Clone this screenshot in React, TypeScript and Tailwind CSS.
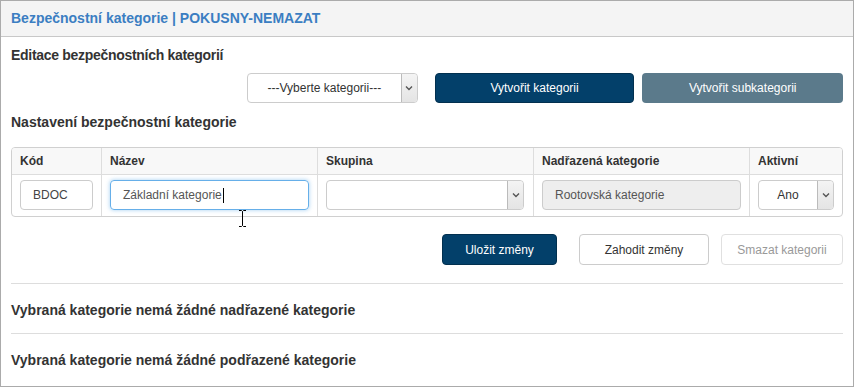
import React from "react";

const Chevron = () => (
  <svg width="8" height="6" viewBox="0 0 8 6" className="block">
    <path d="M1 1.5 L4 4.5 L7 1.5" fill="none" stroke="#555" strokeWidth="1.4" />
  </svg>
);

function SelectBox({ text, className, center = true }: { text: string; className: string; center?: boolean }) {
  return (
    <div className={"flex h-[30px] rounded-[4px] border border-[#ccc] bg-white overflow-hidden " + className}>
      <div className={"flex-1 flex items-center text-[12px] text-[#333] " + (center ? "justify-center" : "pl-3")}>{text}</div>
      <div className="w-[16px] flex items-center justify-center border-l border-[#bbb] bg-gradient-to-b from-[#f4f4f4] to-[#e4e4e4] rounded-r-[3px]">
        <Chevron />
      </div>
    </div>
  );
}

export default function App() {
  return (
    <div className="w-[854px] h-[387px] bg-white font-['Liberation_Sans',Arial,sans-serif] relative">
      <div className="h-full border border-[#ababab] flex flex-col">
        <div className="h-[36px] bg-[#f4f4f4] border-b border-[#c8c8c8] px-[10px] flex items-center text-[14px] font-bold text-[#3b7ec2]">
          Bezpečnostní kategorie | POKUSNY-NEMAZAT
        </div>
        <div className="px-[10px] flex flex-col">
          <h2 className="mt-[8px] h-[20px] leading-[20px] text-[14px] font-bold text-[#333] tracking-[-0.3px]">Editace bezpečnostních kategorií</h2>
          <div className="mt-[8px] flex">
            <SelectBox text="---Vyberte kategorii---" className="ml-[236px] w-[171px]" />
            <button className="ml-[17px] w-[200px] h-[30px] rounded-[4px] bg-[#03406a] border border-[#02304f] text-white text-[12px]">Vytvořit kategorii</button>
            <button className="ml-[8px] w-[201px] h-[30px] rounded-[4px] bg-[#5b7a8b] text-white text-[12px]">Vytvořit subkategorii</button>
          </div>
          <h2 className="mt-[9px] h-[20px] leading-[20px] text-[14px] font-bold text-[#333]">Nastavení bezpečnostní kategorie</h2>
          <div className="mt-[15px] border border-[#d0d0d0] rounded-[4px] grid grid-cols-[90px_216px_216px_216px_1fr] overflow-hidden">
            <div className="h-[27px] bg-[#f8f8f8] border-b border-r border-[#ddd] flex items-center pl-[8px] text-[12px] font-bold text-[#333]">Kód</div>
            <div className="h-[27px] bg-[#f8f8f8] border-b border-r border-[#ddd] flex items-center pl-[8px] text-[12px] font-bold text-[#333]">Název</div>
            <div className="h-[27px] bg-[#f8f8f8] border-b border-r border-[#ddd] flex items-center pl-[8px] text-[12px] font-bold text-[#333]">Skupina</div>
            <div className="h-[27px] bg-[#f8f8f8] border-b border-r border-[#ddd] flex items-center pl-[8px] text-[12px] font-bold text-[#333]">Nadřazená kategorie</div>
            <div className="h-[27px] bg-[#f8f8f8] border-b border-[#ddd] flex items-center pl-[8px] text-[12px] font-bold text-[#333]">Aktivní</div>

            <div className="h-[41px] border-r border-[#ddd] pl-[8px] pr-[8px] pt-[5px]">
              <div className="h-[30px] rounded-[4px] border border-[#ccc] flex items-center pl-[12px] text-[12px] text-[#444]">BDOC</div>
            </div>
            <div className="h-[41px] border-r border-[#ddd] pl-[8px] pr-[8px] pt-[5px]">
              <div className="h-[30px] rounded-[4px] border border-[#66afe9] shadow-[0_0_4px_rgba(102,175,233,0.6)] flex items-center pl-[12px] text-[12px] text-[#555]">
                Základní kategorie<span className="w-[1px] h-[15px] bg-black ml-[1px]" />
              </div>
            </div>
            <div className="h-[41px] border-r border-[#ddd] pl-[8px] pr-[9px] pt-[5px]">
              <SelectBox text="" className="w-full" />
            </div>
            <div className="h-[41px] border-r border-[#ddd] pl-[8px] pr-[8px] pt-[5px]">
              <div className="h-[30px] rounded-[4px] border border-[#ccc] bg-[#eee] flex items-center pl-[12px] text-[12px] text-[#555]">Rootovská kategorie</div>
            </div>
            <div className="h-[41px] pl-[8px] pr-[8px] pt-[5px]">
              <SelectBox text="Ano" className="w-full" />
            </div>
          </div>
          <div className="mt-[17px] flex">
            <button className="ml-[431px] w-[115px] h-[31px] rounded-[4px] bg-[#03406a] border border-[#02304f] text-white text-[12px]">Uložit změny</button>
            <button className="ml-[22px] w-[130px] h-[31px] rounded-[4px] bg-white border border-[#ccc] text-[#333] text-[12px]">Zahodit změny</button>
            <button className="ml-[12px] w-[122px] h-[31px] rounded-[4px] bg-white border border-[#e0e0e0] text-[#999] text-[12px]">Smazat kategorii</button>
          </div>
          <div className="mt-[18px] border-t border-[#ddd] h-[50px] pt-[3px] flex items-center text-[14px] font-bold text-[#333]">Vybraná kategorie nemá žádné nadřazené kategorie</div>
          <div className="border-t border-[#ddd] h-[50px] pt-[3px] flex items-center text-[14px] font-bold text-[#333]">Vybraná kategorie nemá žádné podřazené kategorie</div>
        </div>
      </div>
      <svg className="absolute left-[238px] top-[210px]" width="9" height="17" viewBox="0 0 9 17">
        <path d="M1 0.5 H3.5 L4.5 1.5 L5.5 0.5 H8 M4.5 1.5 V15.5 M1 16.5 H3.5 L4.5 15.5 L5.5 16.5 H8" fill="none" stroke="#000" strokeWidth="1" />
      </svg>
    </div>
  );
}
